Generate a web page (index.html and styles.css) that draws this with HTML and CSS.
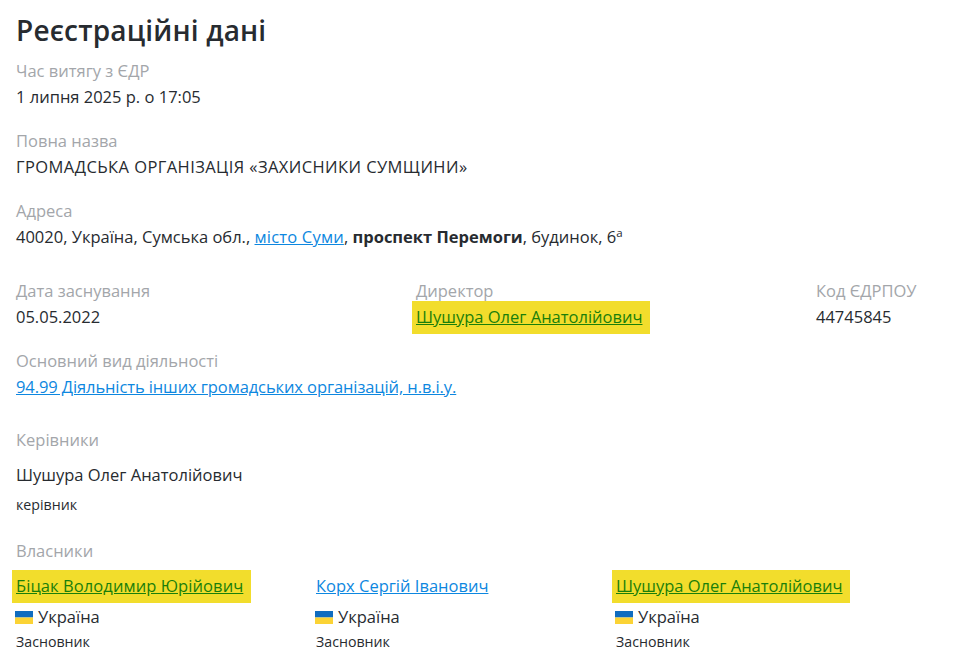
FILE: index.html
```html
<!DOCTYPE html>
<html lang="uk">
<head>
<meta charset="utf-8">
<title>Реєстраційні дані</title>
<link rel="stylesheet" href="styles.css">
</head>
<body>
<main class="page">
  <h1 class="title">Реєстраційні дані</h1>
  <section class="field">
    <div class="label">Час витягу з ЄДР</div>
    <div class="value">1 липня 2025 р. о 17:05</div>
  </section>
  <section class="field">
    <div class="label">Повна назва</div>
    <div class="value caps">ГРОМАДСЬКА ОРГАНІЗАЦІЯ «ЗАХИСНИКИ СУМЩИНИ»</div>
  </section>
  <section class="field">
    <div class="label">Адреса</div>
    <div class="value">40020, Україна, Сумська обл., <a class="link city" href="#">місто Суми</a>, <strong>проспект Перемоги</strong>, будинок, 6<sup class="sup">а</sup></div>
  </section>
  <section class="field-row">
    <div>
      <div class="label">Дата заснування</div>
      <div class="value">05.05.2022</div>
    </div>
    <div>
      <div class="label">Директор</div>
      <div class="value"><span class="mark"><a class="link link-green" href="#">Шушура Олег Анатолійович</a></span></div>
    </div>
    <div>
      <div class="label">Код ЄДРПОУ</div>
      <div class="value">44745845</div>
    </div>
  </section>
  <section class="field">
    <div class="label">Основний вид діяльності</div>
    <div class="value"><a class="link activity" href="#">94.99 Діяльність інших громадських організацій, н.в.і.у.</a></div>
  </section>
  <section class="managers">
    <div class="label">Керівники</div>
    <div class="person">Шушура Олег Анатолійович</div>
    <div class="role">керівник</div>
  </section>
  <section class="owners">
    <div class="label">Власники</div>
    <div class="owner-grid">
      <div>
        <div class="value"><span class="mark"><a class="link link-green wide" href="#">Біцак Володимир Юрійович</a></span></div>
        <div class="country"><svg class="flag" viewBox="0 0 18 13" aria-hidden="true"><rect width="18" height="6.5" fill="#0f6cc0"/><rect y="6.5" width="18" height="6.5" fill="#fbd335"/></svg>Україна</div>
        <div class="role">Засновник</div>
      </div>
      <div>
        <div class="value"><a class="link" href="#">Корх Сергій Іванович</a></div>
        <div class="country"><svg class="flag" viewBox="0 0 18 13" aria-hidden="true"><rect width="18" height="6.5" fill="#0f6cc0"/><rect y="6.5" width="18" height="6.5" fill="#fbd335"/></svg>Україна</div>
        <div class="role">Засновник</div>
      </div>
      <div>
        <div class="value"><span class="mark"><a class="link link-green" href="#">Шушура Олег Анатолійович</a></span></div>
        <div class="country"><svg class="flag" viewBox="0 0 18 13" aria-hidden="true"><rect width="18" height="6.5" fill="#0f6cc0"/><rect y="6.5" width="18" height="6.5" fill="#fbd335"/></svg>Україна</div>
        <div class="role">Засновник</div>
      </div>
    </div>
  </section>
</main>
</body>
</html>
```
FILE: styles.css
```css
html, body { margin: 0; padding: 0; background: #fff; overflow: hidden; }
body { height: 669px; font-family: "Open Sans", "Noto Sans", sans-serif; font-size: 16.5px; color: #272b30; }
.page { padding: 10px 0 0 16px; }
.title { margin: 0 0 8px; font-size: 28px; line-height: 40px; font-weight: 600; color: #272b30; letter-spacing: .17px; }
.field { margin-bottom: 18px; }
.field-row { display: grid; grid-template-columns: 400px 400px 1fr; margin: 28px 0 18px; }
.label { line-height: 26px; color: #a3a6aa; }
.value { line-height: 26px; }
.caps { letter-spacing: .42px; }
.link { color: #0d87e0; text-decoration: underline; }
.city { letter-spacing: .2px; }
.activity { letter-spacing: -.1px; }
.link-green { color: #1a7f0a; }
.wide { letter-spacing: .08px; }
.mark { display: inline-block; margin: -3px -8px -4px -4px; padding: 3px 8px 4px 4px; background: #f2dd2c; }
.sup { font-size: 11.5px; line-height: 0; vertical-align: 6px; }
.managers { margin-top: 27px; }
.person { line-height: 26px; margin-top: 9px; }
.role { font-size: 14.2px; line-height: 20px; margin-top: 7px; }
.owners { margin-top: 23px; }
.owner-grid { display: grid; grid-template-columns: repeat(3, 300px); margin-top: 9px; }
.country { display: flex; align-items: center; line-height: 26px; margin-top: 5px; }
.flag { width: 18px; height: 13px; margin: 0 5px 0 -1px; }
.owner-grid .role { margin-top: 2px; }
```
